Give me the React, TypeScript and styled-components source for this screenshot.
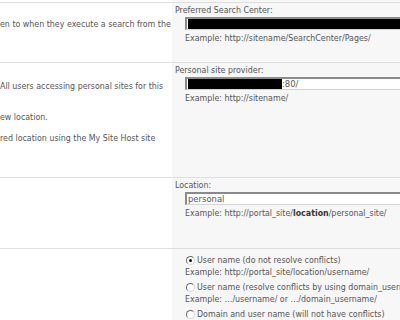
import React from "react"
import styled, { createGlobalStyle } from "styled-components"

const Global = createGlobalStyle`
  html, body { margin: 0; padding: 0; background: #fff; }
  body {
    width: 400px;
    height: 320px;
    overflow: hidden;
    font-family: "DejaVu Sans", "Liberation Sans", sans-serif;
    font-stretch: condensed;
    font-size: 8.8px;
    color: #555;
  }
`

const S = {
    Page: styled.div`
    display: flex;
    flex-direction: column;
    width: 400px;
    overflow: hidden;
  `,
    Row: styled.div<{ h: number; first?: boolean }>`
    display: flex;
    flex: none;
    height: ${({ h }) => h}px;
    box-sizing: border-box;
    & > * { border-top: ${({ first }) => (first ? "none" : "1px solid #dedede")}; }
  `,
    Desc: styled.div<{ pad?: number }>`
    box-sizing: border-box;
    width: 172px;
    flex: none;
    background: #fff;
    padding-top: ${({ pad }) => pad || 0}px;
    white-space: nowrap;
    overflow: hidden;
  `,
    DescLine: styled.div<{ gap?: number }>`
    line-height: 12px;
    margin-top: ${({ gap }) => gap || 0}px;
  `,
    Field: styled.div`
    box-sizing: border-box;
    flex: 1;
    min-width: 0;
    background: #f7f7f7;
    padding: 1px 0 0 3px;
    white-space: nowrap;
    overflow: hidden;
  `,
    Label: styled.div`
    line-height: 12px;
  `,
    Indent: styled.div`
    padding-left: 10px;
  `,
    Input: styled.div`
    box-sizing: border-box;
    height: 13px;
    width: 260px;
    margin-top: 1px;
    border-top: 2px solid #8a8a8a;
    border-left: 2px solid #8a8a8a;
    border-bottom: 1px solid #d4d4d4;
    background: #fff;
    display: flex;
    align-items: center;
    color: #555;
    font-size: 9.4px;
    line-height: 10px;
    padding-left: 1px;
  `,
    Redact: styled.span<{ w?: number }>`
    display: inline-block;
    flex: none;
    height: 10px;
    background: #000;
    width: ${({ w }) => (w ? `${w}px` : "100%")};
  `,
    Example: styled.div`
    line-height: 12px;
    margin-top: 2px;
    b { color: #333; }
  `,
    Options: styled.div`
    padding-top: 4px;
  `,
    Option: styled.div<{ first?: boolean }>`
    display: flex;
    align-items: center;
    line-height: 12px;
    padding-left: 1px;
    margin-top: ${({ first }) => (first ? 0 : 3)}px;
  `,
    Radio: styled.span<{ checked?: boolean }>`
    box-sizing: border-box;
    flex: none;
    width: 9px;
    height: 9px;
    border-radius: 50%;
    border: 1px solid #6a6a6a;
    border-right-color: #d8d8d8;
    border-bottom-color: #d8d8d8;
    background: #fff;
    margin-right: 2px;
    display: inline-flex;
    align-items: center;
    justify-content: center;
    &::after {
      content: "";
      width: 3px;
      height: 3px;
      border-radius: 50%;
      background: ${({ checked }) => (checked ? "#111" : "transparent")};
    }
  `,
    SubExample: styled.div`
    line-height: 12px;
  `,
}

export default function App() {
    return (
        <>
            <Global />
            <S.Page>
                <S.Row h={2} first>
                    <S.Desc />
                    <S.Field />
                </S.Row>
                <S.Row h={60}>
                    <S.Desc pad={15}>
                        <S.DescLine>en to when they execute a search from the</S.DescLine>
                    </S.Desc>
                    <S.Field>
                        <S.Label>Preferred Search Center:</S.Label>
                        <S.Indent>
                            <S.Input><S.Redact /></S.Input>
                            <S.Example>Example: http://sitename/SearchCenter/Pages/</S.Example>
                        </S.Indent>
                    </S.Field>
                </S.Row>
                <S.Row h={115}>
                    <S.Desc pad={17}>
                        <S.DescLine>All users accessing personal sites for this</S.DescLine>
                        <S.DescLine gap={19}>ew location.</S.DescLine>
                        <S.DescLine gap={9}>red location using the My Site Host site</S.DescLine>
                    </S.Desc>
                    <S.Field>
                        <S.Label>Personal site provider:</S.Label>
                        <S.Indent>
                            <S.Input><S.Redact w={94} />:80/</S.Input>
                            <S.Example>Example: http://sitename/</S.Example>
                        </S.Indent>
                    </S.Field>
                </S.Row>
                <S.Row h={71}>
                    <S.Desc />
                    <S.Field>
                        <S.Label>Location:</S.Label>
                        <S.Indent>
                            <S.Input>personal</S.Input>
                            <S.Example>Example: http://portal_site/<b>location</b>/personal_site/</S.Example>
                        </S.Indent>
                    </S.Field>
                </S.Row>
                <S.Row h={72}>
                    <S.Desc />
                    <S.Field>
                        <S.Indent>
                            <S.Options>
                                <S.Option first><S.Radio checked />User name (do not resolve conflicts)</S.Option>
                                <S.SubExample>Example: http://portal_site/location/username/</S.SubExample>
                                <S.Option><S.Radio />User name (resolve conflicts by using domain_username)</S.Option>
                                <S.SubExample>Example: …/username/ or …/domain_username/</S.SubExample>
                                <S.Option><S.Radio />Domain and user name (will not have conflicts)</S.Option>
                            </S.Options>
                        </S.Indent>
                    </S.Field>
                </S.Row>
            </S.Page>
        </>
    )
}
